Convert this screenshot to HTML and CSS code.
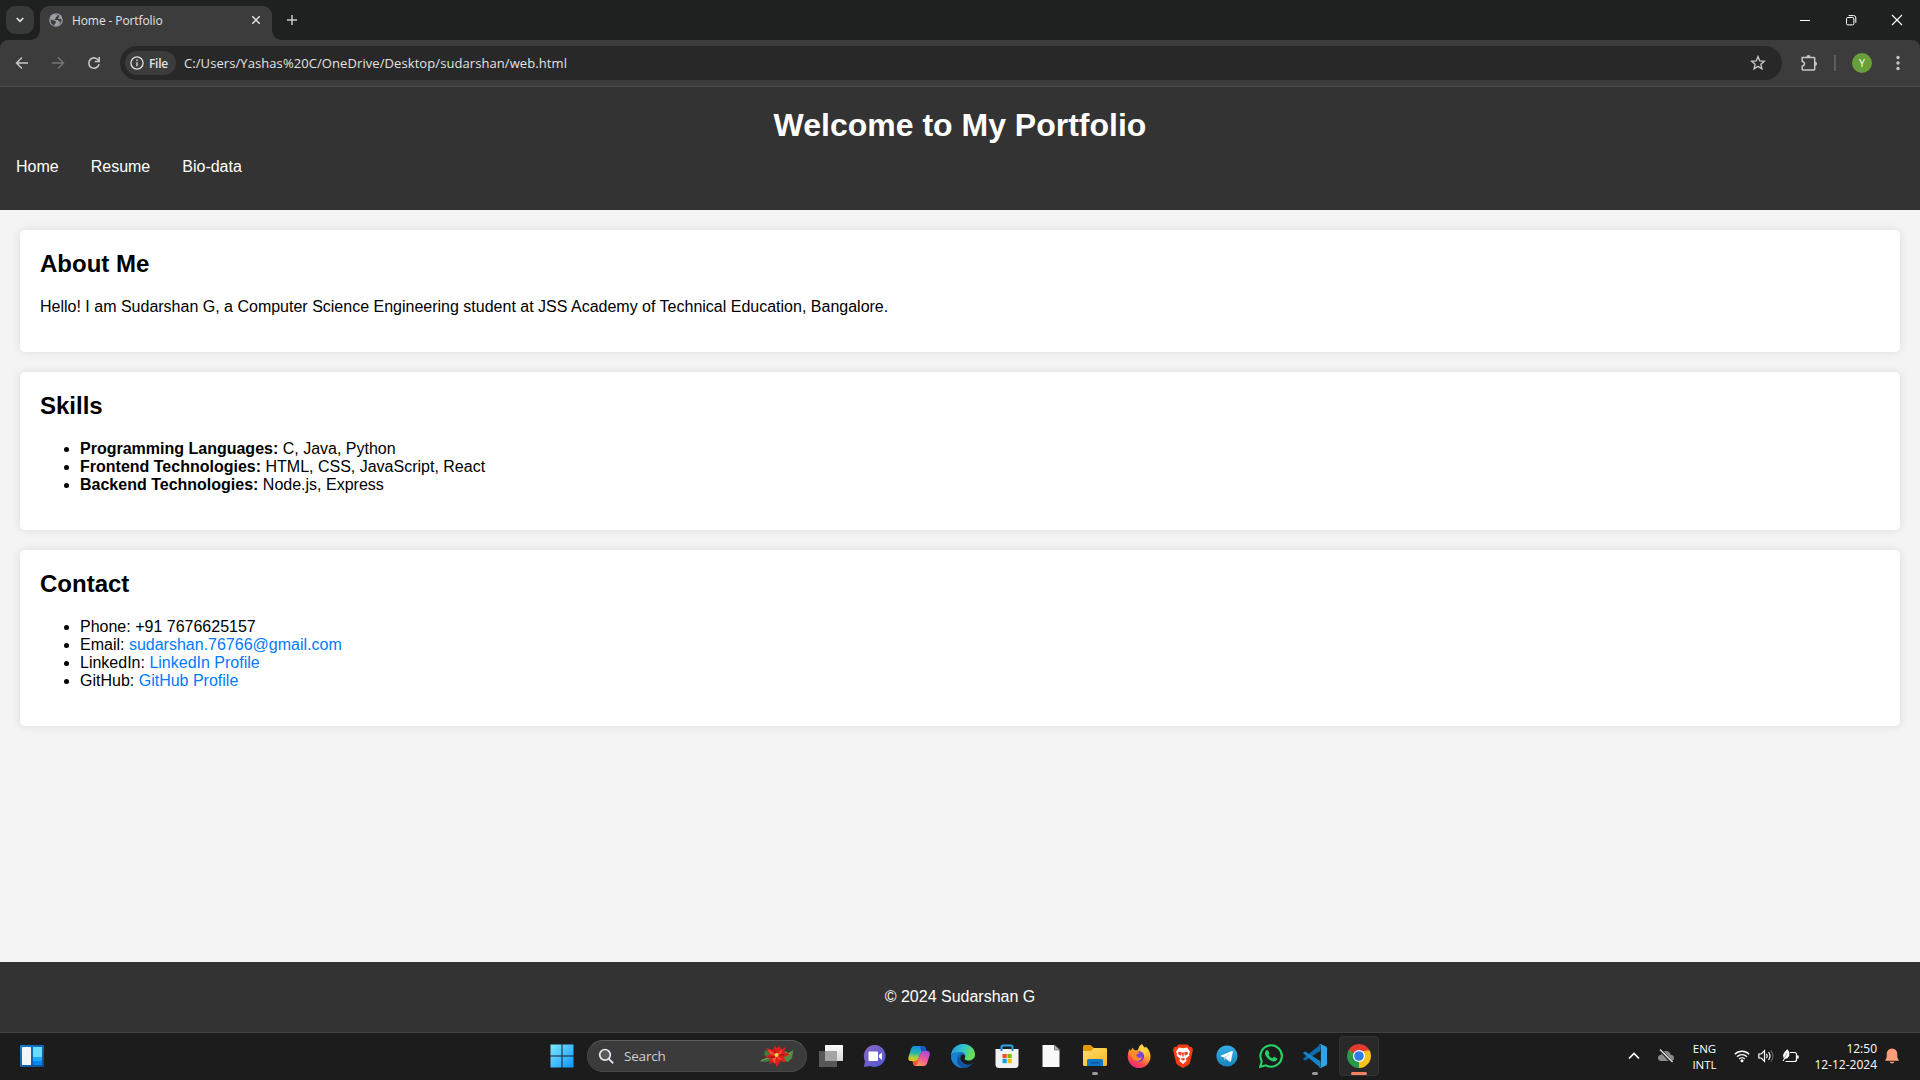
FILE: index.html
```html
<!DOCTYPE html>
<html lang="en">
<head>
<meta charset="utf-8">
<title>Home - Portfolio</title>
<link rel="stylesheet" href="styles.css">
</head>
<body>
<div class="tabstrip">
  <div class="tab-search"><svg width="10" height="8" viewBox="0 0 10 8"><path d="M1.7 2 5 5.3 8.3 2" fill="none" stroke="#e3e3e3" stroke-width="1.7"/></svg></div>
  <div class="tab">
    <svg class="favicon" width="14" height="14" viewBox="0 0 14 14"><circle cx="7" cy="7" r="6.8" fill="#9aa0a6"/><path d="M1.6 6.4 4.4 7.2 7 8.6 6.8 10.3 5.6 10.8 5.4 12.6C3.2 12 1.3 9.5 1.6 6.4M5.8 1.6 8.6 1.5 8.4 3.2 7 4.1 6.8 5.4 5.2 6 6 7 8.6 6.9 9.8 8.3 11.4 8.4 10.6 11 8.7 12.4C11.2 11.8 12.8 9.4 12.4 6.3L11 5.8 10.3 6.3 8.9 5.4 10.2 3.7 9.7 2.1" fill="#3c3c3c"/></svg>
    <span class="tab-title">Home - Portfolio</span>
    <svg class="tab-close" width="10" height="10" viewBox="0 0 10 10"><path d="m1.3 1.300 7.400 7.400M8.700 1.300l-7.400 7.400" stroke="#e3e3e3" stroke-width="1.5"/></svg>
  </div>
  <svg class="new-tab" width="12" height="12" viewBox="0 0 12 12"><path d="M6 .9v10.200M.9 6h10.200" stroke="#c7c7c7" stroke-width="1.5"/></svg>
  <div class="window-controls">
    <svg width="12" height="12" viewBox="0 0 12 12"><path d="M1 6.5h10" stroke="#fff"/></svg>
    <svg width="12" height="12" viewBox="0 0 12 12"><rect x="1.5" y="3.5" width="7.4" height="7.4" rx="1.4" fill="none" stroke="#fff"/><path d="M3.6 1.6h5a2.2 2.2 0 0 1 2.2 2.2v5" fill="none" stroke="#fff"/></svg>
    <svg width="12" height="12" viewBox="0 0 12 12"><path d="m1 1 10 10M11 1 1 11" stroke="#fff" stroke-width="1.1"/></svg>
  </div>
</div>
<div class="toolbar-back">
<div class="toolbar">
  <div class="nav-icons">
    <svg width="14" height="14" viewBox="0 0 14 14"><path d="M13 7H2M7 1.500 1.500 7 7 12.500" fill="none" stroke="#c7c7c7" stroke-width="1.5"/></svg>
    <svg width="14" height="14" viewBox="0 0 14 14"><path d="M1 7h11M7 1.500 12.500 7 7 12.500" fill="none" stroke="#757575" stroke-width="1.5"/></svg>
    <svg width="14" height="14" viewBox="0 0 14 14"><path d="M11.6 4.600A5.200 5.200 0 1 0 12.100 8.200" fill="none" stroke="#c7c7c7" stroke-width="1.6"/><path d="M13 1v5.200H7.800V4.700h3.600V1z" fill="#c7c7c7"/></svg>
  </div>
  <div class="omnibox">
    <div class="chip">
      <svg width="14" height="14" viewBox="0 0 14 14"><circle cx="7" cy="7" r="6.100" fill="none" stroke="#e3e3e3" stroke-width="1.300"/><path d="M7 6.2v4M7 3.6v1.4" stroke="#e3e3e3" stroke-width="1.300"/></svg>
      <span>File</span>
    </div>
    <span class="url">C:/Users/Yashas%20C/OneDrive/Desktop/sudarshan/web.html</span>
    <svg class="star" width="16" height="16" viewBox="0 0 16 16"><path d="m8 1.6 1.75 4.3 4.65.38-3.55 3.02 1.1 4.5L8 11.4l-3.95 2.4 1.1-4.5L1.6 6.28l4.65-.38z" fill="none" stroke="#c7c7c7" stroke-width="1.35"/></svg>
  </div>
  <svg class="extensions" width="18" height="18" viewBox="0 0 18 18"><path d="M2.2 3.6H14q.7 0 .7.7v11q0 .7-.7.7H2.9q-.7 0-.7-.7v-3.1q2.3-.5 2.3-2.4T2.2 7.4z" fill="none" stroke="#c7c7c7" stroke-width="1.5"/><path d="M6.4 3.2a2.1 2.1 0 0 1 4.2 0zM15 7.7a2.1 2.1 0 0 1 0 4.2z" fill="#c7c7c7"/></svg>
  <span class="divider"></span>
  <span class="avatar">Y</span>
  <svg class="menu" width="4" height="16" viewBox="0 0 4 16"><g fill="#c7c7c7"><circle cx="2" cy="2.5" r="1.7"/><circle cx="2" cy="8" r="1.7"/><circle cx="2" cy="13.5" r="1.7"/></g></svg>
</div>
</div>

<div class="page">
  <header class="site-header">
    <h1>Welcome to My Portfolio</h1>
    <nav><a>Home</a><a>Resume</a><a>Bio-data</a></nav>
  </header>
  <main>
    <section class="card">
      <h2>About Me</h2>
      <p>Hello! I am Sudarshan G, a Computer Science Engineering student at JSS Academy of Technical Education, Bangalore.</p>
    </section>
    <section class="card">
      <h2>Skills</h2>
      <ul>
        <li><strong>Programming Languages:</strong> C, Java, Python</li>
        <li><strong>Frontend Technologies:</strong> HTML, CSS, JavaScript, React</li>
        <li><strong>Backend Technologies:</strong> Node.js, Express</li>
      </ul>
    </section>
    <section class="card">
      <h2>Contact</h2>
      <ul>
        <li>Phone: +91 7676625157</li>
        <li>Email: <a>sudarshan.76766@gmail.com</a></li>
        <li>LinkedIn: <a>LinkedIn Profile</a></li>
        <li>GitHub: <a>GitHub Profile</a></li>
      </ul>
    </section>
  </main>
  <footer class="site-footer">© 2024 Sudarshan G</footer>
</div>

<div class="taskbar">
  <div class="widgets">
    <svg width="24" height="22" viewBox="0 0 24 22"><defs><linearGradient id="wg" x2="1" y2="1"><stop stop-color="#0b7fdc"/><stop offset="1" stop-color="#174a87"/></linearGradient></defs><rect width="24" height="22" rx="1" fill="url(#wg)"/><rect x="2" y="2" width="9" height="18" rx=".6" fill="#f5f5f5"/><path d="M13 2h9v10h-9z" fill="#68dbff"/><path d="M13 12h9v4h-9z" fill="#1ca7ff"/><path d="M13 16h9v4h-9z" fill="#0087f2"/></svg>
  </div>
  <div class="apps">
    <div class="slot start"><svg width="24" height="24" viewBox="0 0 24 24"><defs><linearGradient id="win" x2="1" y2="1"><stop stop-color="#7fe9ff"/><stop offset="1" stop-color="#0a95ff"/></linearGradient></defs><path d="M.5.5h11v11H.5zM12.5.5h11v11h-11zM.5 12.5h11v11H.5zM12.5 12.5h11v11h-11z" fill="url(#win)"/></svg></div>
    <div class="search">
      <svg width="16" height="16" viewBox="0 0 16 16"><circle cx="7" cy="6.8" r="5.3" fill="#5a5a5a" stroke="#e4e8ee" stroke-width="1.7"/><path d="m10.8 10.8 3.8 3.9" stroke="#e4e8ee" stroke-width="1.9" stroke-linecap="round"/></svg>
      <span>Search</span>
      <svg class="flower" width="36" height="24" viewBox="0 0 36 24"><path d="M13 8 7 6 6 11 10 13 1 17.5 8 18 15 16z" fill="#47763b"/><path d="M22 9 28 7 30 9 35.5 6 34 14 30 18 21 15z" fill="#558a42"/><path d="m3 16.5 9-3M24 13l9-4" stroke="#8cb568" stroke-width=".8"/><path d="M19 4 21.500 1.500 23 5.500 28 3 26 8 32 10.500 26 13 27.500 18.500 22.500 17 19 23 16.500 18 11 20 12.500 15 7 12.500 12 10.500 8 4 15 6 16.500 1.500z" fill="#dc1f18"/><path d="m18 11-8-6 2 5zM19 11l5-6-1 6zM18 12l-1 8-3-5zM19 12l6 4-5-1z" fill="#ff5140"/><path d="m19 11-3-7 1 6zM18 12l-9 1 7 1zM20 12l8-1-6-1z" fill="#a90f13"/><circle cx="18.500" cy="11" r="2" fill="#f5d442"/></svg>
    </div>
    <div class="slot"><svg width="24" height="24" viewBox="0 0 24 24"><defs><linearGradient id="tv" x2="0" y2="1"><stop stop-color="#fff"/><stop offset="1" stop-color="#d6d6d6"/></linearGradient></defs><rect x="6" y="1" width="18" height="16" rx=".6" fill="url(#tv)"/><path d="M0 7h18v16H0z" fill="#585858"/><path d="M6 7h12v10H6z" fill="#a5a5a5"/></svg></div>
    <div class="slot"><svg width="24" height="24" viewBox="0 0 24 24"><defs><linearGradient id="ch" x2="1" y2="1"><stop stop-color="#8d6ac0"/><stop offset="1" stop-color="#4c56d6"/></linearGradient></defs><path d="M12 1a11 11 0 1 1-5 21l-6 1 1-6A11 11 0 0 1 12 1" fill="url(#ch)"/><rect x="5.500" y="7.500" width="9.500" height="9.500" rx="1" fill="#fff"/><path d="m16 11 3-2.500v7.500l-3-2.500z" fill="#fff"/></svg></div>
    <div class="slot"><svg width="24" height="24" viewBox="0 0 24 24"><defs><linearGradient id="cp1" x1=".3" y1="0" x2=".2" y2="1"><stop stop-color="#168be0"/><stop offset=".45" stop-color="#25b7b0"/><stop offset=".75" stop-color="#a7cf3e"/><stop offset="1" stop-color="#f6c21c"/></linearGradient><linearGradient id="cp2" x1=".8" y1="0" x2=".3" y2="1"><stop stop-color="#a24be4"/><stop offset=".5" stop-color="#f0569a"/><stop offset="1" stop-color="#ff9c55"/></linearGradient></defs><path d="M7 2h9q2 0 2.700 2.300L19.500 7h-3q-2 0-2.700 2l-2.500 6q-.8 2-3 2H4q-3.500 0-2.500-4L4 5q1-3 3-3" fill="url(#cp1)"/><path d="M13 2h3q2 0 2.700 2.300L19.500 7h-3q-1.500 0-2.200 1z" fill="#1c56cc"/><path d="M16.500 7H20q3.500 0 2.700 4l-2.500 8q-1 3-3.500 3H9q-2 0-2.700-2l-.8-3h3q2 0 2.800-2l2.500-6q.7-2 2.700-2" fill="url(#cp2)"/><path d="M5.500 17h3q2 0 2.800-2L10 20.500q-1 1.500-2 1.500-1.300-.5-1.700-2z" fill="#ee5834"/></svg></div>
    <div class="slot"><svg width="24" height="24" viewBox="0 0 24 24"><defs><linearGradient id="ed" x2="1" y2=".4"><stop stop-color="#1d91de"/><stop offset=".55" stop-color="#32c5c9"/><stop offset="1" stop-color="#6be04f"/></linearGradient></defs><circle cx="12" cy="12" r="12" fill="#1769bb"/><path d="M0 11.500C.6 5 5.500 0 12 0s12 4.800 12 10.200c0 4-3 6.300-6.700 6.300-3.500 0-4.300-1.300-3.600-2.200 1.800-2.600.2-6.300-4.200-6.300C5 8 1 9 0 11.500" fill="url(#ed)"/><path d="M9.600 8C3 8 0 12 .2 14 1 19.500 6 24 12 24 8 22 5.500 19 6 14.800 6.300 11.500 8 9 11 8.200" fill="#1b82d3"/><path d="M8.600 12.300C7.800 18 12.500 21.500 17 20.500q3-.6 5.200-2.500C20 21.800 16.300 24 12 24 5 21.800 4.500 14.500 8.600 12.300" fill="#0f559f"/><path d="M10 11.500q-2 4 2 7.500 4.500 3.500 10.500-.2l1.500-2.300V13q-3 4.500-8 3.500c-3-.5-2.300-2-2-2.900.8-2-2-4.300-4-2.100" fill="#1c1c1c"/></svg></div>
    <div class="slot"><svg width="24" height="24" viewBox="0 0 24 24"><path d="M6.500 6V3q0-1.500 1.500-1.500h8q1.500 0 1.500 1.500v3" fill="none" stroke="#29a7ed" stroke-width="2"/><path d="M.5 5h23v15.500q0 3.500-3.500 3.500H4q-3.500 0-3.500-3.500z" fill="#f2f2f2"/><path d="M5.500 4.500h2V7h-2zM16.500 4.500h2V7h-2z" fill="#1584cc"/><path d="M7.500 10h4.200v4.200H7.500z" fill="#f25022"/><path d="M12.500 10h4.200v4.200h-4.200z" fill="#7fba00"/><path d="M7.500 15h4.200v4.200H7.500z" fill="#00a4ef"/><path d="M12.500 15h4.200v4.200h-4.200z" fill="#ffb900"/></svg></div>
    <div class="slot"><svg width="24" height="24" viewBox="0 0 24 24"><path d="M3.500 1h12l5 5v17h-17z" fill="#f8f8f8"/><path d="M15.500 1v5h5z" fill="#b8b8b8" stroke="#6e6e6e" stroke-width=".8"/></svg></div>
    <div class="slot running"><svg width="24" height="24" viewBox="0 0 24 24"><defs><linearGradient id="fx" x2="1" y2="1"><stop stop-color="#ffdf70"/><stop offset="1" stop-color="#f6b41e"/></linearGradient></defs><path d="M0 2.500Q0 1 1.500 1h6L11 4h11v6H0z" fill="#e09b05"/><path d="M0 7h8l3-3h12q1 0 1 1v15.500q0 1.500-1.500 1.500h-21Q0 22 0 20.500z" fill="url(#fx)"/><path d="M4 22v-5.500Q4 15 5.500 15h13q1.500 0 1.500 1.500V22z" fill="#0f78cc"/><path d="M7.500 18h9v1.500h-9z" fill="#0a5aa5"/></svg></div>
    <div class="slot"><svg width="24" height="24" viewBox="0 0 24 24"><defs><linearGradient id="ff" x1=".8" y1="0" x2=".3" y2="1"><stop stop-color="#fff24a"/><stop offset=".45" stop-color="#ffa02b"/><stop offset=".75" stop-color="#ff4a45"/><stop offset="1" stop-color="#e8268a"/></linearGradient></defs><path d="M15 0q1 2 3 3.800.8-.3.800-1.200 4.700 4.400 4.700 10a11.300 11.300 0 0 1-22.800 0Q.5 8 3 4.500L3.400 7 6 3.500q.2 2 1.600 2.700h3.200Q12 1.500 15 0" fill="url(#ff)"/><circle cx="12" cy="12.500" r="5.200" fill="#7542e5"/><path d="M3.500 8Q7 6 9 8l3.500.3q-.5 2-3 2.200-.5 2 1.500 3 2 .8 4-.8-1 4.300-5 4.300-5.500-.5-6.500-9" fill="#ff8a27"/><path d="M13 6.500q5.500 1.500 4.500 7.500 2.500-3 1-7.500L15 2z" fill="#ffd43b"/></svg></div>
    <div class="slot"><svg width="24" height="24" viewBox="0 0 24 24"><path d="m7.500.5-2 2.200-2.500.5L2 6l.5 2L5 18.500q.5 1.800 2 2.800L12 24l5-2.700q1.500-1 2-2.800L21.500 8l.5-2-1-2.800-2.500-.5-2-2.200z" fill="#f73b17"/><path d="m12 4.300 4-.7 3 4-1 2.300.5 1.600-3.500 3 .5 2.500L12 20l-3.500-3 .5-2.500-3.500-3L6 9.900 5 7.600l3-4z" fill="#fff"/><path d="M7.500 7.800 11 8.500l-1 3.300L7 10zM16.500 7.800 13 8.500l1 3.300L17 10zM9.500 15l2.500-1 2.500 1-2.500 1.800zM11 8.500h2l-.4 4h-1.200z" fill="#f73b17"/></svg></div>
    <div class="slot"><svg width="24" height="24" viewBox="0 0 24 24"><defs><linearGradient id="tg" x2="0" y2="1"><stop stop-color="#36aee8"/><stop offset="1" stop-color="#1685be"/></linearGradient></defs><circle cx="12" cy="12" r="10.600" fill="url(#tg)"/><path d="m5 12 12-5q1-.2.800 1L16 17q-.3 1.200-1.300.5L9 13.500z" fill="#fff"/><path d="m9 13.500 6-4.500-4.500 5-.7 3z" fill="#a9d2e9"/></svg></div>
    <div class="slot"><svg width="24" height="24" viewBox="0 0 24 24"><path d="m1.200 22.800 1.600-5.600A10.700 10.700 0 1 1 6.900 21.300z" fill="none" stroke="#25d366" stroke-width="2.100"/><path d="M7.500 6.200q.7-.5 1.400 0L10.300 9q.2.600-.8 1.700 1.200 2.500 3.900 3.700l1.100-1.300q.4-.5 1-.2l2.500 1.300q.5.300.1 1.300-1 2.300-3.600 2-4.500-.5-7.700-5.500-2-3.400.7-5.800" fill="#25d366"/></svg></div>
    <div class="slot running"><svg width="24" height="24" viewBox="0 0 24 24"><path d="M17.500 6.800 2.300 16.400.5 15.500Q-.2 15 .6 14.200L17.500.2z" fill="#0b6bac"/><path d="M17.500 17.200 2.300 7.600.5 8.500Q-.2 9 .6 9.800l16.900 14z" fill="#1684cc"/><path d="m17.500.1 5.500 2.500q1 .5 1 1.500v15.800q0 1-1 1.500L17.500 24q-1 .3-1.600-.5 2 .4 2-1.500V2q0-1.800-2-1.500.6-.8 1.600-.4" fill="#2da5ea"/></svg></div>
    <div class="slot active"><svg width="24" height="24" viewBox="0 0 24 24"><path d="M12 12 1.610 6A12 12 0 0 1 22.390 6z" fill="#e33b2e"/><path d="M12 12V24A12 12 0 0 1 1.610 6z" fill="#279847"/><path d="M12 12 22.390 6A12 12 0 0 1 12 24z" fill="#fcc31e"/><path d="M12 6h10.390L16 10zM6.800 15 1.610 6l6 4.500zM17.200 15 12 24l1-7z" fill="#fcc31e"/><path d="M12 6h10.390L12 8z" fill="#e33b2e"/><path d="M6.800 15 1.610 6 9 12z" fill="#279847"/><circle cx="12" cy="12" r="6" fill="#fff"/><circle cx="12" cy="12" r="4.800" fill="#2f7be8"/></svg></div>
  </div>
  <div class="tray">
    <svg class="chevron" width="12" height="8" viewBox="0 0 12 8"><path d="m1 6.500 5-5 5 5" fill="none" stroke="#fff" stroke-width="1.600"/></svg>
    <svg class="cloud" width="18" height="16" viewBox="0 0 18 16"><path d="M4.500 13Q1 13 1 9.800 1.200 7 4.200 6.700 5.500 3 9 3q3.700 0 4.600 3.700Q17 7 17 10q0 3-3 3z" fill="#8b8b8b"/><path d="m2.500 1 13 14" stroke="#1c1c1c" stroke-width="3"/><path d="m3 1.500 12.500 12.500" stroke="#eee" stroke-width="1.200"/></svg>
    <div class="lang"><span>ENG</span><span>INTL</span></div>
    <svg class="wifi" width="16" height="14" viewBox="0 0 16 14"><g fill="none" stroke="#fff" stroke-width="1.300"><path d="M.8 5.300a10 10 0 0 1 14.400 0M3 7.700a7 7 0 0 1 10 0M5.200 10a4 4 0 0 1 5.600 0"/></g><circle cx="8" cy="11.700" r="1.500" fill="#fff"/></svg>
    <svg class="sound" width="16" height="14" viewBox="0 0 16 14"><path d="M.8 5h2.400l3.300-3.300v10.600L3.200 9H.8z" fill="none" stroke="#fff" stroke-width="1.200"/><path d="M8.500 4.800q1.500 2.200 0 4.400M10.500 3q3 4 0 8" fill="none" stroke="#fff" stroke-width="1.200"/><path d="M12.700 1.300q4.500 5.700 0 11.400" fill="none" stroke="#626262" stroke-width="1.200"/></svg>
    <svg class="battery" width="17" height="14" viewBox="0 0 17 14"><path d="M8 3.500h4.500q2 0 2 2v5q0 2-2 2h-9M1.500 11v1" fill="none" stroke="#fff" stroke-width="1.200"/><path d="M15 6.500h1.700v3H15zM5.500.3Q8.500 4 6.800 7.500 5.500 10 3 9.700L1.500 12 .8 11.400 2 9.200Q-1 5.500 5.500.3" fill="#fff"/><path d="m5 4-2.500 5" stroke="#777" stroke-width=".7"/></svg>
    <div class="clock"><span>12:50</span><span>12-12-2024</span></div>
    <svg class="bell" width="14" height="16" viewBox="0 0 14 16"><path d="M7 .5q5 .2 5.300 5.500v3.500L13.700 12v.7H.3V12l1.400-2.500V6Q2 .7 7 .5M4.500 13.700h5Q9 15.500 7 15.500t-2.500-1.800" fill="#ff9f7a"/></svg>
  </div>
</div>
</body>
</html>
```
FILE: styles.css
```css
* { box-sizing: border-box; }
svg { display: block; flex: none; }
body {
  margin: 0;
  height: 1080px;
  display: grid;
  grid-template-rows: 40px 47px 945px 48px;
  overflow: hidden;
  font-family: "Liberation Sans", Arial, sans-serif;
  background: #f4f4f4;
}

.tabstrip, .toolbar, .taskbar { font-family: "Open Sans", "Noto Sans", sans-serif; white-space: nowrap; }

/* Tab strip */
.tabstrip { display: flex; background: #1f2120; padding: 6px 17px 0 6px; }
.tab-search {
  width: 28px; height: 28px; margin-right: 6px;
  display: flex; align-items: center; justify-content: center;
  border-radius: 9px; background: #383a39;
}
.tab {
  position: relative;
  width: 232px; height: 34px;
  display: flex; align-items: center;
  padding: 0 11px 6px 9px;
  background: #3c3c3c; border-radius: 9px 9px 0 0;
}
.tab::before, .tab::after {
  content: ""; position: absolute; bottom: 0; width: 9px; height: 9px;
}
.tab::before { left: -9px; background: radial-gradient(circle at 0 0, transparent 8.500px, #3c3c3c 9px); }
.tab::after { right: -9px; background: radial-gradient(circle at 100% 0, transparent 8.500px, #3c3c3c 9px); }
.tab-title { margin-left: 9px; padding-top: 1px; font-size: 12px; line-height: 16px; color: #e3e3e3; letter-spacing: -0.100px; }
.tab-close { margin-left: auto; }
.new-tab { margin: 8px 0 0 14px; }
.window-controls { display: flex; gap: 34px; margin: 8px 0 0 auto; }

/* Toolbar */
.toolbar-back { background: #1f2120; }
.toolbar {
  height: 47px; display: flex; align-items: center;
  padding: 0 20px 0 15px;
  background: #3c3c3c; border-bottom: 1px solid #4a4a4a; border-radius: 8px 8px 0 0;
}
.nav-icons { display: flex; gap: 22px; width: 105px; }
.omnibox {
  width: 1662px; height: 34px; display: flex; align-items: center;
  padding: 0 16px 0 5px; border-radius: 17px; background: #282828;
}
.chip {
  width: 51px; height: 24px; display: flex; align-items: center; gap: 5px;
  padding-left: 5px; border-radius: 12px; background: #3c3c3c;
  color: #e3e3e3; font-size: 12px; font-weight: 600; letter-spacing: -0.300px;
}
.url { margin-left: 8px; font-size: 13px; letter-spacing: 0.080px; color: #e3e3e3; }
.star { margin-left: auto; }
.extensions { margin-left: 18px; }
.divider { width: 2px; height: 16px; margin: 0 16px; background: #5c5c5c; }
.avatar {
  width: 20px; height: 20px; border-radius: 50%; background: #689f38; color: #fff;
  font-size: 10.500px; line-height: 20px; text-align: center;
}
.menu { margin-left: 24px; }

/* Portfolio page */
.page { display: flex; flex-direction: column; background: #f4f4f4; }
.site-header { height: 123px; padding: 20px 0 0; background: #333; color: #fff; }
h1 { margin: 0; font-size: 32px; line-height: 36px; text-align: center; }
nav { display: flex; gap: 32px; padding: 15px 16px 0; font-size: 16px; line-height: 18px; }
main { display: flex; flex-direction: column; gap: 20px; padding: 20px; }
.card { padding: 20px 20px 36px; background: #fff; border-radius: 5px; box-shadow: 0 0 10px rgba(0, 0, 0, .1); font-size: 16px; line-height: 18px; }
h2 { margin: 0 0 20px; font-size: 24px; line-height: 28px; }
p, ul { margin: 0; }
ul { padding-left: 40px; }
.card a { color: #007bff; }
.site-footer { height: 70px; margin-top: auto; padding-top: 26px; background: #333; color: #fff; text-align: center; line-height: 18px; }

/* Taskbar */
.taskbar {
  display: grid; grid-template-columns: 540px 1fr 300px; align-items: center;
  padding-bottom: 1px;
  background: #1c1c1c; border-top: 1px solid #414141; color: #fff;
}
.widgets { padding-left: 20px; }
.apps { display: flex; align-items: center; }
.slot {
  position: relative; width: 44px; height: 40px;
  display: flex; align-items: center; justify-content: center;
}
.start { margin-right: 3px; }
.search {
  width: 220px; height: 32px; margin-right: 2px; padding: 0 12px 0 10px;
  display: flex; align-items: center; border-radius: 16px;
  background: #3b3b3b; border: 1px solid #484848; border-top-color: #5c5c5c;
  font-size: 13.500px; color: #d0d0d0;
}
.search span { margin-left: 10px; letter-spacing: -0.200px; }
.flower { margin-left: auto; }
.running::after, .active::after {
  content: ""; position: absolute; bottom: 1px; left: 19px; width: 6px; height: 3px;
  border-radius: 2px; background: #9a9a9a;
}
.active { width: 40px; margin-left: 2px; border: 1px solid #333; border-radius: 4px; background: #292929; }
.active::after { left: 11px; bottom: 0; width: 16px; background: #f58165; }
.tray { display: flex; align-items: center; padding-left: 8px; }
.tray div { display: flex; flex-direction: column; padding-top: 2px; font-size: 11.500px; line-height: 16px; }
.cloud { margin-left: 17px; }
.lang { width: 25px; margin-left: 17px; align-items: center; }
.wifi { margin-left: 17px; }
.sound { margin-left: 8px; }
.battery { margin-left: 8px; }
.tray .clock { width: 63px; margin-left: 15px; align-items: flex-end; font-size: 12px; }
.bell { margin-left: 8px; }
```
